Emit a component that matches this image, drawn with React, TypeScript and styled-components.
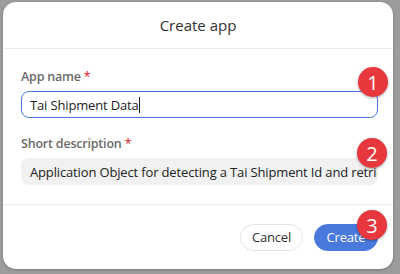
import { createGlobalStyle, styled } from 'styled-components';

const GlobalStyle = createGlobalStyle`
    html, body {
        margin: 0;
        padding: 0;
        background: #9c9c9c;
        font-family: 'Segoe UI', 'Open Sans', 'Noto Sans', sans-serif;
    }
`;

const Backdrop = styled.div`
    width: 400px;
    height: 274px;
    padding: 2px 7px 5px 3px;
    box-sizing: border-box;
    background: #9c9c9c;
    overflow: hidden;
`;

const Modal = styled.div`
    height: 100%;
    background: #ffffff;
    border-radius: 13px;
    display: flex;
    flex-direction: column;
    box-shadow: 0 1px 3px rgba(0, 0, 0, 0.25);
`;

const Header = styled.div`
    height: 46px;
    display: flex;
    align-items: center;
    justify-content: center;
    border-bottom: 1px solid #ececec;
    font-size: 15px;
    color: #333;
`;

const Body = styled.div`
    padding: 19px 15px 19px 18px;
    display: flex;
    flex-direction: column;
    gap: 17px;
    border-bottom: 1px solid #ececec;
`;

const Field = styled.div`
    display: flex;
    flex-direction: column;
    gap: 6px;
    position: relative;
`;

const Label = styled.div`
    font-size: 12.5px;
    font-weight: 600;
    color: #6b6b6b;
    letter-spacing: -0.2px;

    span {
        color: #e0454a;
    }
`;

const Input = styled.div<{ $focused?: boolean }>`
    height: 27px;
    border-radius: 8px;
    box-sizing: border-box;
    padding: 0 8px;
    display: flex;
    align-items: center;
    font-size: 13px;
    letter-spacing: -0.15px;
    color: #222;
    white-space: nowrap;
    overflow: hidden;
    border: ${({ $focused }) => ($focused ? '1.5px solid #4b78d8' : '1px solid transparent')};
    background: ${({ $focused }) => ($focused ? '#fff' : '#f1f1f1')};
`;

const Caret = styled.span`
    display: inline-block;
    width: 1px;
    height: 16px;
    background: #222;
`;

const Footer = styled.div`
    flex: 1;
    display: flex;
    justify-content: flex-end;
    align-items: center;
    gap: 11px;
    padding: 0 15px 0 0;
    position: relative;
`;

const Button = styled.button<{ $primary?: boolean }>`
    height: 27px;
    width: ${({ $primary }) => ($primary ? '64px' : '63px')};
    border-radius: 14px;
    padding: 0;
    font-family: inherit;
    font-size: 13px;
    letter-spacing: -0.2px;
    border: 1px solid ${({ $primary }) => ($primary ? '#4a79de' : '#e4e4e4')};
    background: ${({ $primary }) => ($primary ? '#4a79de' : '#fff')};
    color: ${({ $primary }) => ($primary ? '#fff' : '#333')};
`;

const Badge = styled.div<{ $top: number; $right: number }>`
    position: absolute;
    top: ${({ $top }) => $top}px;
    right: ${({ $right }) => $right}px;
    width: 30px;
    height: 30px;
    border-radius: 50%;
    background: #e8383d;
    color: #fff;
    font-size: 20px;
    display: flex;
    align-items: center;
    justify-content: center;
    box-shadow: 0 1px 3px rgba(0, 0, 0, 0.35);
`;

const App = () => {
    return (
        <>
            <GlobalStyle />
            <Backdrop>
                <Modal>
                    <Header>Create app</Header>
                    <Body>
                        <Field>
                            <Label>
                                App name <span>*</span>
                            </Label>
                            <Input $focused>
                                Tai Shipment Data
                                <Caret />
                            </Input>
                            <Badge $top={-1} $right={-10}>1</Badge>
                        </Field>
                        <Field>
                            <Label>
                                Short description <span>*</span>
                            </Label>
                            <Input>
                                Application Object for detecting a Tai Shipment Id and retrieving
                            </Input>
                            <Badge $top={3} $right={-9}>2</Badge>
                        </Field>
                    </Body>
                    <Footer>
                        <Button>Cancel</Button>
                        <Button $primary>Create</Button>
                        <Badge $top={5} $right={6}>3</Badge>
                    </Footer>
                </Modal>
            </Backdrop>
        </>
    );
};

export default App;
